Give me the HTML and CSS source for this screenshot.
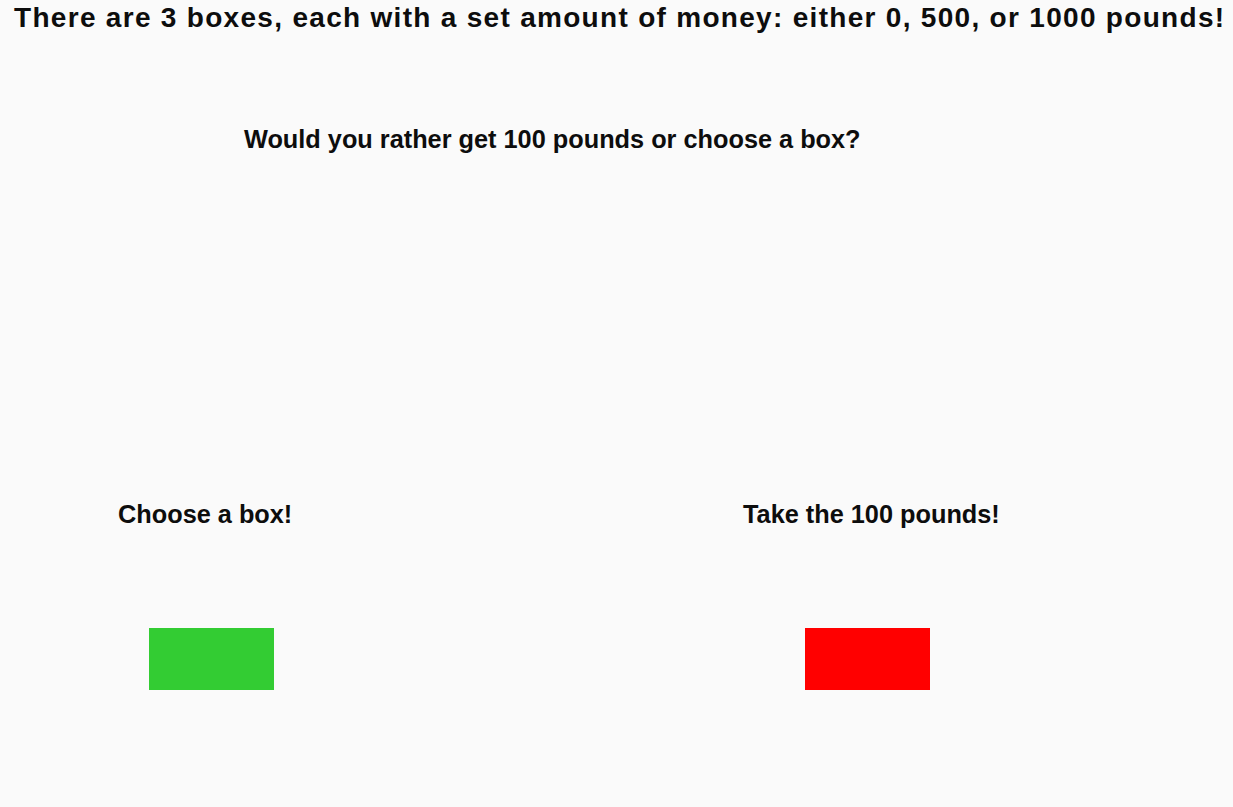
FILE: index.html
```html
<!DOCTYPE html>
<html lang="en">
<head>
<meta charset="utf-8">
<title>Box game</title>
<link rel="stylesheet" href="styles.css">
</head>
<body>
<main class="page">
  <h1 class="intro">There are 3 boxes, each with a set amount of money: either 0, 500, or 1000 pounds!</h1>
  <h2 class="question">Would you rather get 100 pounds or choose a box?</h2>
  <section class="choices">
    <div class="choice choice-box">
      <p class="choice-label">Choose a box!</p>
      <button class="choice-btn btn-green" type="button" aria-label="Choose a box"></button>
    </div>
    <div class="choice choice-cash">
      <p class="choice-label">Take the 100 pounds!</p>
      <button class="choice-btn btn-red" type="button" aria-label="Take the 100 pounds"></button>
    </div>
  </section>
</main>
</body>
</html>
```

FILE: styles.css
```css
html, body {
  margin: 0;
  padding: 0;
  background: #fafafa;
}

body {
  width: 1233px;
  height: 807px;
  overflow: hidden;
  font-family: "Liberation Sans", Arial, sans-serif;
  color: #0d0d0d;
}

.page {
  display: flex;
  flex-direction: column;
}

.intro {
  margin: 4px 0 0 0;
  padding-left: 14px;
  font-size: 28px;
  line-height: 28px;
  font-weight: bold;
  letter-spacing: 1.3px;
  white-space: nowrap;
}

.question {
  margin: 95px 0 0 0;
  padding-left: 244px;
  font-size: 25.3px;
  line-height: 25px;
  font-weight: bold;
  white-space: nowrap;
}

.choices {
  margin-top: 350px;
  display: grid;
  grid-template-columns: 743px 1fr;
}

.choice {
  display: flex;
  flex-direction: column;
  align-items: flex-start;
}

.choice-label {
  margin: 0;
  font-size: 25.3px;
  line-height: 25px;
  font-weight: bold;
  white-space: nowrap;
}

.choice-box .choice-label {
  padding-left: 118px;
}

.choice-cash .choice-label {
  padding-left: 0;
}

.choice-btn {
  display: block;
  width: 125px;
  height: 62px;
  margin-top: 101px;
  border: none;
  padding: 0;
  cursor: pointer;
}

.btn-green {
  background: #33cc33;
  margin-left: 149px;
}

.btn-red {
  background: #ff0000;
  margin-left: 62px;
}
```
